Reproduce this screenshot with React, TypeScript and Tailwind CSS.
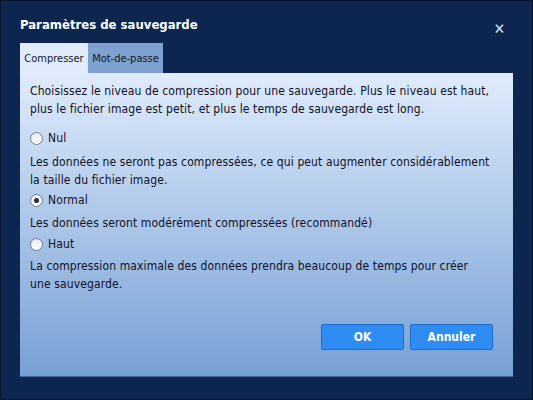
import { useState } from "react";

const options = [
  {
    key: "nul",
    label: "Nul",
    lines: ["Les données ne seront pas compressées, ce qui peut augmenter considérablement", "la taille du fichier image."],
    rowMt: "mt-[11px]",
    descMt: "mt-[6px]",
  },
  {
    key: "normal",
    label: "Normal",
    lines: ["Les données seront modérément compressées (recommandé)"],
    rowMt: "mt-[2px]",
    descMt: "mt-[5px]",
  },
  {
    key: "haut",
    label: "Haut",
    lines: ["La compression maximale des données prendra beaucoup de temps pour créer", "une sauvegarde."],
    rowMt: "mt-[3px]",
    descMt: "mt-[4px]",
  },
];

function Radio({ checked }: { checked: boolean }) {
  return (
    <span className="w-[13px] h-[13px] rounded-full border border-[#6f7f96] bg-gradient-to-b from-[#e9edf2] to-white flex items-center justify-center shrink-0">
      {checked && <span className="w-[5px] h-[5px] rounded-full bg-[#2b2f36]" />}
    </span>
  );
}

export default function App() {
  const [level, setLevel] = useState("normal");
  const [tab, setTab] = useState(0);

  return (
    <div
      className="w-[533px] h-[400px] bg-[#0c2650] border border-[#06152e] flex flex-col px-[19px] text-[12px] leading-[18px]"
      style={{ fontFamily: '"DejaVu Sans Condensed", "DejaVu Sans", Verdana, sans-serif' }}
    >
      {/* Title bar */}
      <div className="h-[42px] flex items-start justify-between pt-[15px]">
        <h1 className="text-white font-bold text-[13px] leading-[18px]">Paramètres de sauvegarde</h1>
        <button className="text-[#dbe5f4] font-bold text-[15px] leading-none mt-[6px] mr-[8px]">✕</button>
      </div>

      {/* Tabs */}
      <div className="flex h-[30px]">
        {[
          { t: "Compresser", w: "w-[68px]" },
          { t: "Mot-de-passe", w: "w-[75px]" },
        ].map((x, i) => (
          <button
            key={x.t}
            onClick={() => setTab(i)}
            className={
              x.w +
              " text-[11px] text-[#111827] pt-[2px] " +
              (tab === i ? "bg-[#e0ecfc]" : "bg-[#7fa1cf]")
            }
          >
            {x.t}
          </button>
        ))}
      </div>

      {/* Panel */}
      <div className="w-[493px] h-[304px] bg-gradient-to-b from-[#e0ecfc] to-[#76a0d4] border-b border-[#46679c] px-[10px] pt-[9px] flex flex-col text-[#10101f] tracking-[0.12px]">
        <p>
          Choisissez le niveau de compression pour une sauvegarde. Plus le niveau est haut,
          <br />
          plus le fichier image est petit, et plus le temps de sauvegarde est long.
        </p>

        {options.map((o) => (
          <div key={o.key} className={o.rowMt}>
            <label className="flex items-center gap-[5px] h-[18px] cursor-pointer" onClick={() => setLevel(o.key)}>
              <Radio checked={level === o.key} />
              <span>{o.label}</span>
            </label>
            <p className={o.descMt + " whitespace-nowrap"}>
              {o.lines.map((l, j) => (
                <span key={j} className="block">
                  {l}
                </span>
              ))}
            </p>
          </div>
        ))}

        <div className="mt-auto mb-[26px] flex justify-end gap-[6px] pr-[10px] tracking-normal">
          <button className="w-[83px] h-[26px] bg-[#2f8cf2] border border-[#1d6ccd] rounded-[2px] text-white font-bold">
            OK
          </button>
          <button className="w-[83px] h-[26px] bg-[#2f8cf2] border border-[#1d6ccd] rounded-[2px] text-white font-bold">
            Annuler
          </button>
        </div>
      </div>
    </div>
  );
}
